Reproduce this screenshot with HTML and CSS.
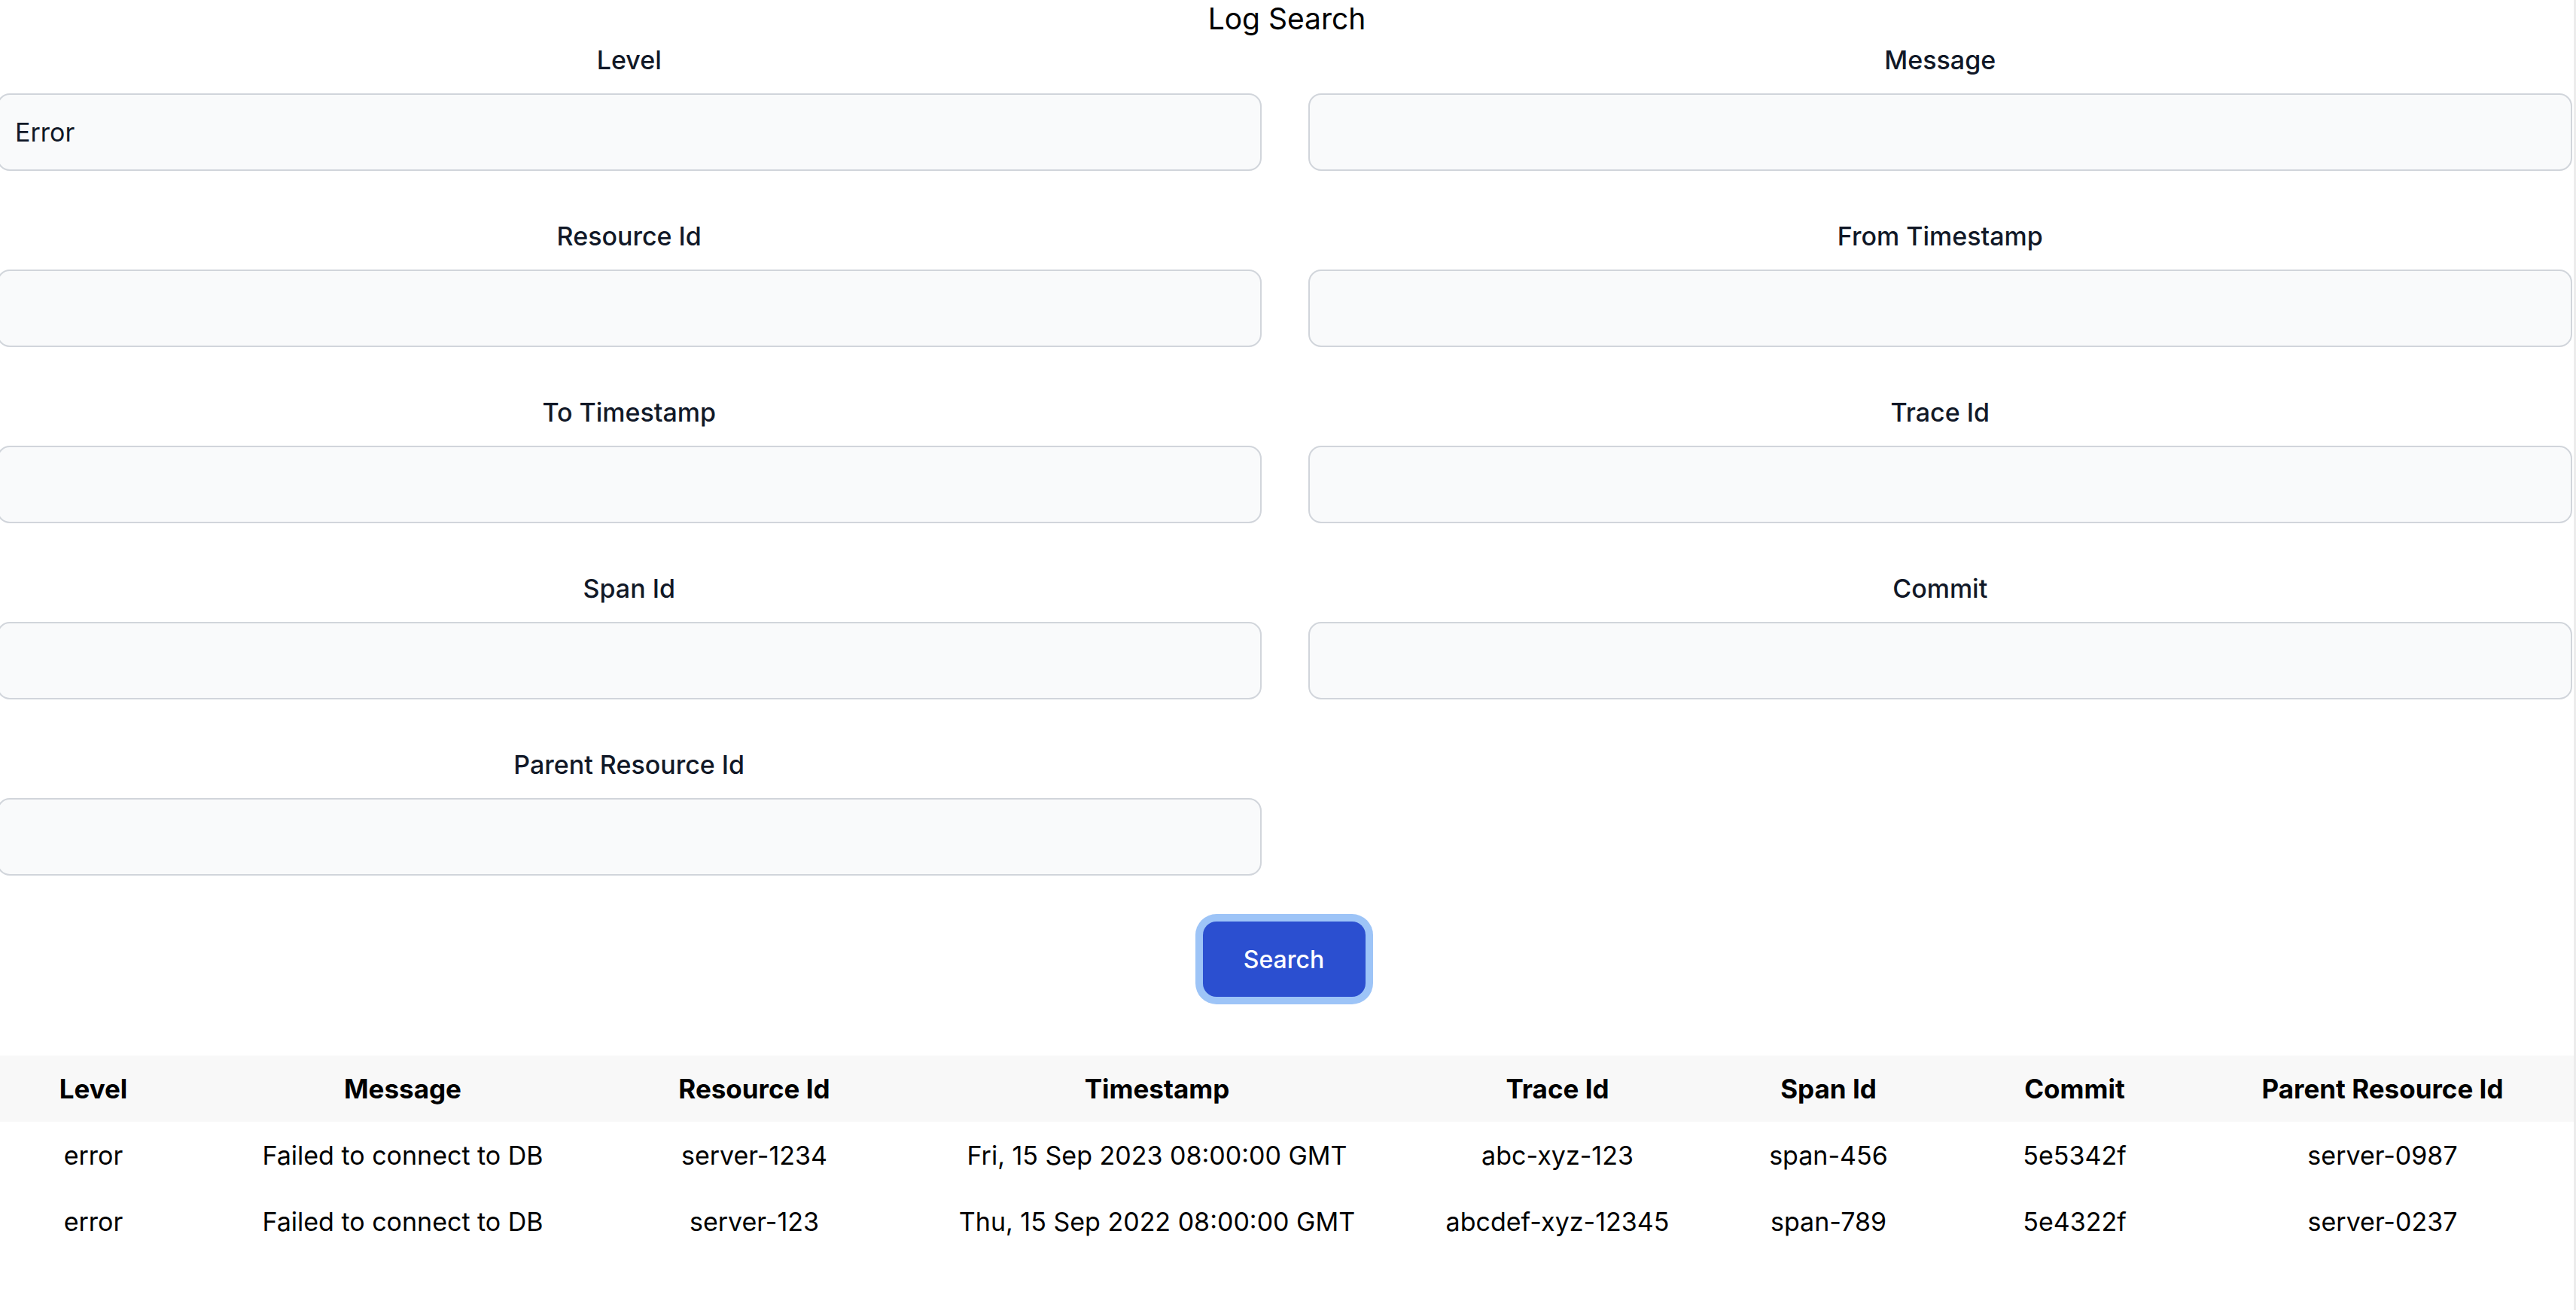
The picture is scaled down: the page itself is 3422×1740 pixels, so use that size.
FILE: index.html
```html
<!DOCTYPE html>
<html lang="en">
<head>
<meta charset="utf-8">
<title>Log Search</title>
<link rel="stylesheet" href="styles.css">
</head>
<body>
<div class="page">
  <h1 class="title">Log Search</h1>
  <form class="form">
    <div class="grid">
      <div class="field"><label class="label">Level</label><input class="input" type="text" value="Error"></div>
      <div class="field"><label class="label">Message</label><input class="input" type="text"></div>
      <div class="field"><label class="label">Resource Id</label><input class="input" type="text"></div>
      <div class="field"><label class="label">From Timestamp</label><input class="input" type="text"></div>
      <div class="field"><label class="label">To Timestamp</label><input class="input" type="text"></div>
      <div class="field"><label class="label">Trace Id</label><input class="input" type="text"></div>
      <div class="field"><label class="label">Span Id</label><input class="input" type="text"></div>
      <div class="field"><label class="label">Commit</label><input class="input" type="text"></div>
      <div class="field"><label class="label">Parent Resource Id</label><input class="input" type="text"></div>
    </div>
    <div class="actions"><button class="btn" type="button">Search</button></div>
  </form>
  <table class="results">
    <colgroup>
      <col class="c-level"><col class="c-msg"><col class="c-res"><col class="c-ts">
      <col class="c-trace"><col class="c-span"><col class="c-commit"><col class="c-parent">
    </colgroup>
    <thead>
      <tr><th>Level</th><th>Message</th><th>Resource Id</th><th>Timestamp</th><th>Trace Id</th><th>Span Id</th><th>Commit</th><th>Parent Resource Id</th></tr>
    </thead>
    <tbody>
      <tr><td>error</td><td>Failed to connect to DB</td><td>server-1234</td><td>Fri, 15 Sep 2023 08:00:00 GMT</td><td>abc-xyz-123</td><td>span-456</td><td>5e5342f</td><td>server-0987</td></tr>
      <tr><td>error</td><td>Failed to connect to DB</td><td>server-123</td><td>Thu, 15 Sep 2022 08:00:00 GMT</td><td>abcdef-xyz-12345</td><td>span-789</td><td>5e4322f</td><td>server-0237</td></tr>
    </tbody>
  </table>
</div>
</body>
</html>
```

FILE: styles.css
```css
* { box-sizing: border-box; }
html, body { margin: 0; padding: 0; background: #ffffff; }
body { font-family: Inter, "Noto Sans", "Liberation Sans", sans-serif; color: #000; }

.page {
  width: 3422px;
  min-height: 1740px;
  border-right: 3px solid #ececec;
  overflow: hidden;
}

.title {
  margin: 0 0 6px 0;
  font-size: 39px;
  line-height: 50px;
  font-weight: 400;
  text-align: center;
  color: #000;
}

.form { margin: 0; }

.grid {
  display: grid;
  grid-template-columns: 1fr 1fr;
  column-gap: 62px;
  row-gap: 63px;
  width: 3421px;
  margin-left: -4px;
}

.field { display: flex; flex-direction: column; }

.label {
  display: block;
  text-align: center;
  font-size: 34px;
  line-height: 48px;
  font-weight: 500;
  color: #111827;
  margin-bottom: 20px;
}

.input {
  display: block;
  width: 100%;
  height: 103px;
  border: 2px solid #d1d5db;
  border-radius: 17px;
  background: #f9fafb;
  padding: 0 22px;
  font-family: inherit;
  font-size: 34px;
  color: #111827;
  outline: none;
}

.actions {
  display: flex;
  justify-content: center;
  margin-top: 61px;
}

.btn {
  width: 216px;
  height: 100px;
  border: none;
  border-radius: 18px;
  background: #2b4fd0;
  color: #ffffff;
  font-family: inherit;
  font-size: 32px;
  font-weight: 500;
  box-shadow: 0 0 0 10px #9dc4f7;
  margin-right: 8px;
}

.results {
  margin-top: 78px;
  width: 3430px;
  border-collapse: collapse;
  table-layout: fixed;
}

.c-level { width: 248px; }
.c-msg { width: 574px; }
.c-res { width: 360px; }
.c-ts { width: 710px; }
.c-trace { width: 354px; }
.c-span { width: 366px; }
.c-commit { width: 288px; }
.c-parent { width: 530px; }

.results thead tr { background: #f8f8f8; }

.results th, .results td {
  height: 88px;
  padding: 0;
  text-align: center;
  vertical-align: middle;
  color: #000;
  white-space: nowrap;
}

.results th { font-weight: 700; font-size: 35px; }
.results td { font-weight: 400; font-size: 34px; }
```
